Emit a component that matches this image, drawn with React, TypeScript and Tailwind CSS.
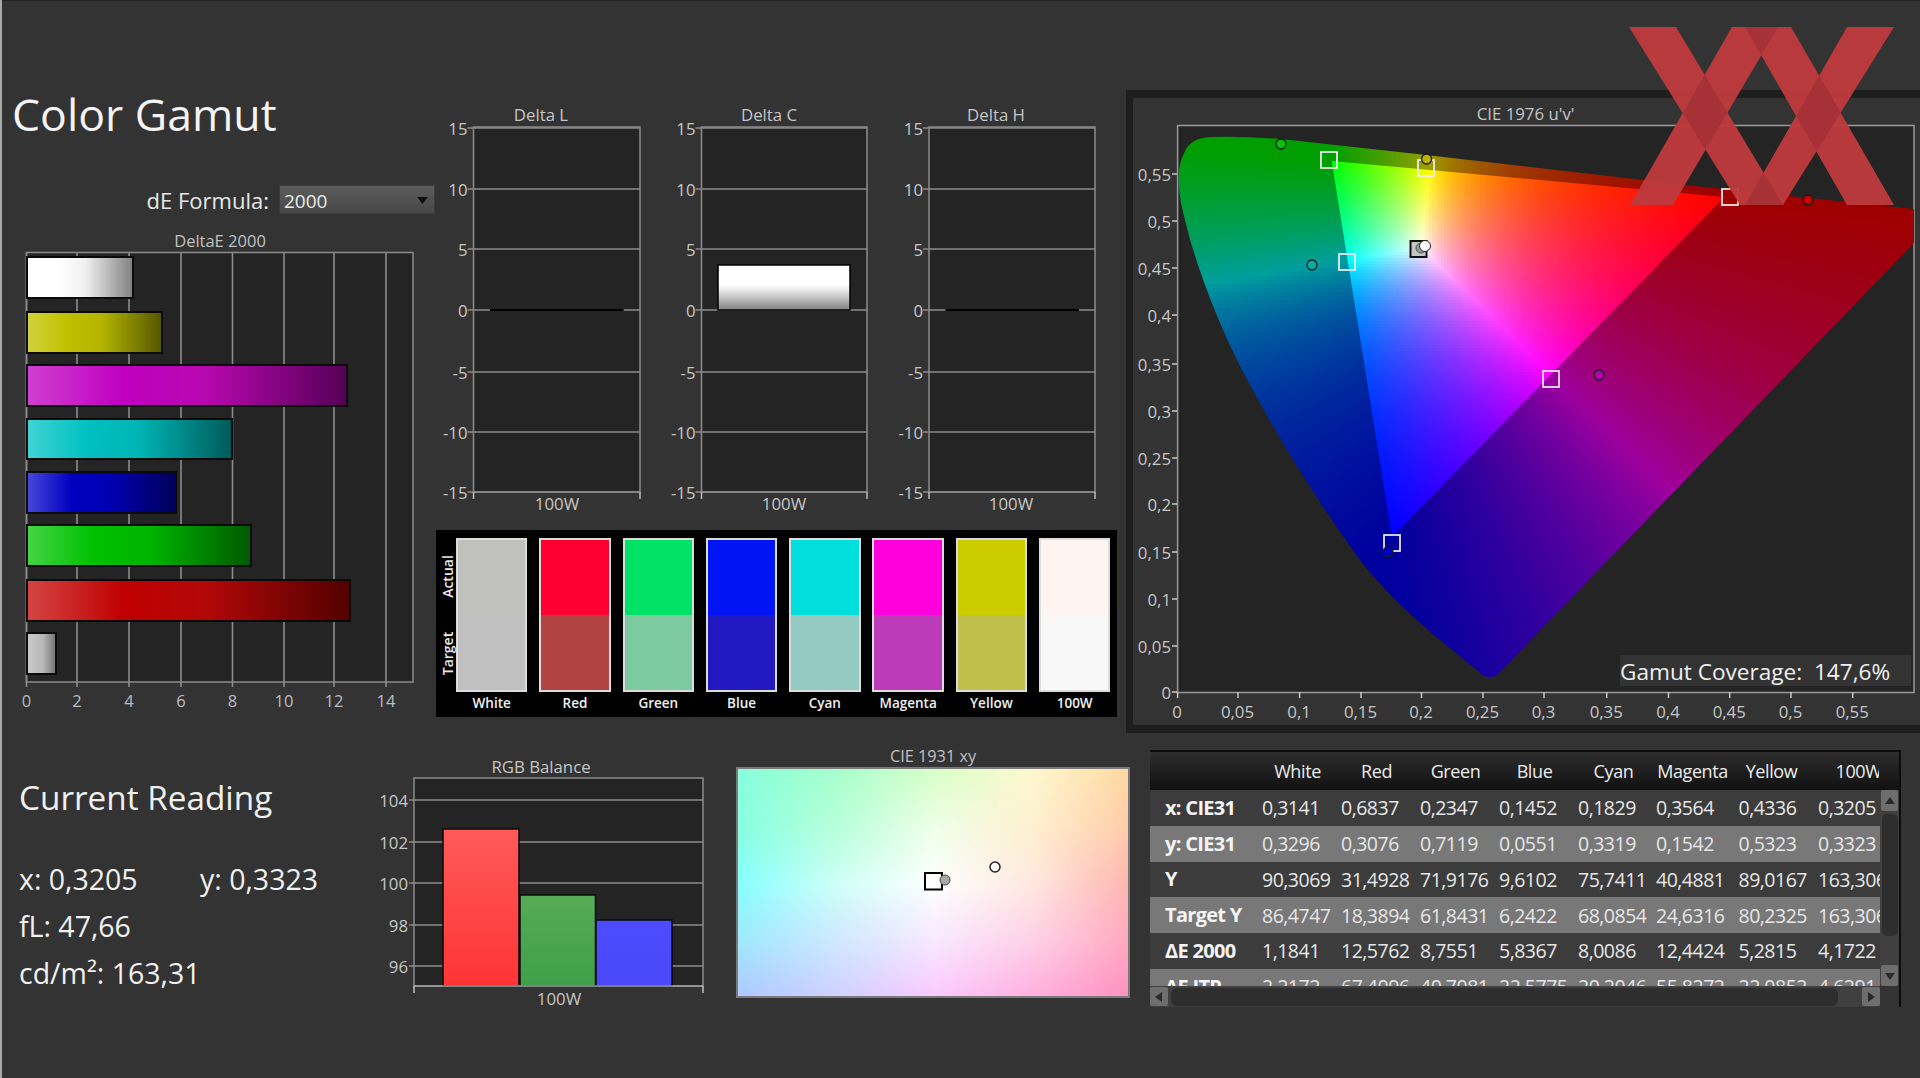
import { useMemo } from "react";

const TICK = "#8c8c8c";
const PLOT = "#242424";
const LABEL = "fill-[#c6c6c6] text-[16.8px]";

// gamut triangle corners and white point weights, in page pixels
const R = [1724.6, 197];
const G = [1331.7, 161];
const B = [1392, 537];
const WHITE = [0.1946, 0.5926, 0.2128];

const LOCUS = "M1914 209L1722 189L1643 180L1426 155L1281 139Q1240 136 1212 137Q1192 137 1185 151Q1178 165 1178.6 180Q1179 192 1181 203C1194 265 1222 333 1247.5 380C1282 445 1320 505 1360 560C1395 605 1440 640 1477 670Q1490 686 1505 667L1914 243Z";
const INNER = `M${R[0]} ${R[1]}L${G[0]} ${G[1]}L${B[0]} ${B[1]}Z`;

function weights(x: number, y: number) {
  const d = (G[1] - B[1]) * (R[0] - B[0]) + (B[0] - G[0]) * (R[1] - B[1]);
  const r = ((G[1] - B[1]) * (x - B[0]) + (B[0] - G[0]) * (y - B[1])) / d;
  const g = ((B[1] - R[1]) * (x - B[0]) + (R[0] - B[0]) * (y - B[1])) / d;
  return [r, g, 1 - r - g];
}

function gamutColor(x: number, y: number, inside: boolean) {
  const w = weights(x, y).map((v, i) => Math.max(v, 0) / WHITE[i]);
  const max = Math.max(...w);
  const c = w.map((v) => (inside ? Math.pow(v / max, 0.95) * 255 : (v / max) * 158));
  return `rgb(${c[0] | 0},${c[1] | 0},${c[2] | 0})`;
}

// rough test against the locus outline, only to skip cells nobody sees
function nearLocus(x: number, y: number) {
  if (y < 130 || y > 690) return false;
  const right = y < 243 ? 1920 : 1914 - (y - 243) * 0.965 + 8;
  const left = y < 267 ? 1174 : 1196 + (y - 267) * 0.55 - 30;
  return x >= left && x <= right;
}

function GamutMesh() {
  const cells = useMemo(() => {
    const out: { x: number; y: number; s: number; f: string }[] = [];
    for (let y = 132; y < 690; y += 4) {
      for (let x = 1176; x < 1916; x += 4) {
        if (!nearLocus(x, y)) continue;
        const w = weights(x + 2, y + 2);
        if (Math.min(...w) > 0.03) continue;
        out.push({ x, y, s: 4, f: gamutColor(x + 2, y + 2, false) });
      }
    }
    return out;
  }, []);
  const inner = useMemo(() => {
    const out: { x: number; y: number; s: number; f: string }[] = [];
    for (let y = 159; y < 540; y += 3) {
      for (let x = 1330; x < 1727; x += 3) {
        if (Math.min(...weights(x + 1.5, y + 1.5)) < -0.02) continue;
        out.push({ x, y, s: 3, f: gamutColor(x + 1.5, y + 1.5, true) });
      }
    }
    return out;
  }, []);
  return (
    <>
      <defs>
        <clipPath id="locus"><path d={LOCUS} /></clipPath>
        <clipPath id="inner"><path d={INNER} /></clipPath>
      </defs>
      <g clipPath="url(#locus)" shapeRendering="crispEdges">
        {cells.map((c) => <rect key={`${c.x}-${c.y}`} x={c.x} y={c.y} width={c.s} height={c.s} fill={c.f} />)}
      </g>
      <g clipPath="url(#inner)" shapeRendering="crispEdges">
        {inner.map((c) => <rect key={`${c.x}-${c.y}`} x={c.x} y={c.y} width={c.s} height={c.s} fill={c.f} />)}
      </g>
    </>
  );
}

const XY_COLORS = [
  ["#88ffdd", "#a8ffcc", "#d8ffc8", "#fff8d0", "#ffd8a0"],
  ["#88ffe0", "#b8ffdc", "#f0ffe8", "#fff0d0", "#ffcca8"],
  ["#88ffff", "#d0fff8", "#ffffff", "#ffe8e0", "#ffb4b0"],
  ["#a0e8ff", "#d0e8ff", "#f8e8ff", "#ffd0e8", "#ffa8c0"],
  ["#b0c8ff", "#d0d0ff", "#fcc8ff", "#ffb0e0", "#ff90c0"],
].map((row) => row.map((h) => [1, 3, 5].map((i) => parseInt(h.slice(i, i + 2), 16))));

function xyColor(u: number, v: number) {
  const cx = Math.min(u * 4, 3.999);
  const cy = Math.min(v * 4, 3.999);
  const i = Math.floor(cx);
  const j = Math.floor(cy);
  const a = cx - i;
  const b = cy - j;
  const c = [0, 1, 2].map((k) =>
    (XY_COLORS[j][i][k] * (1 - a) + XY_COLORS[j][i + 1][k] * a) * (1 - b) +
    (XY_COLORS[j + 1][i][k] * (1 - a) + XY_COLORS[j + 1][i + 1][k] * a) * b
  );
  return `rgb(${c[0] | 0},${c[1] | 0},${c[2] | 0})`;
}

function XyChart() {
  const cells = useMemo(() => {
    const out: { x: number; y: number; f: string }[] = [];
    for (let y = 768; y < 997; y += 4) {
      for (let x = 737; x < 1129; x += 4) {
        out.push({ x, y, f: xyColor((x - 737) / 392, (y - 768) / 229) });
      }
    }
    return out;
  }, []);
  return (
    <svg viewBox="730 740 410 270" className="block w-[410px] h-[270px] shrink-0">
      <text x="933" y="756" textAnchor="middle" dominantBaseline="central" className="fill-[#c0c0c0] text-[16.3px]">CIE 1931 xy</text>
      <defs><clipPath id="xyclip"><rect x="737" y="768" width="392" height="229" /></clipPath></defs>
      <g clipPath="url(#xyclip)" shapeRendering="crispEdges">
        {cells.map((c) => <rect key={`${c.x}-${c.y}`} x={c.x} y={c.y} width="4" height="4" fill={c.f} />)}
      </g>
      <rect x="737" y="768" width="392" height="229" fill="none" stroke="#7a7a7a" strokeWidth="2" />
      <rect x="925" y="873" width="17" height="16.5" fill="#fff" stroke="#000" strokeWidth="2" />
      <circle cx="945" cy="880" r="5" fill="#a8a8a8" stroke="#444" />
      <circle cx="995" cy="867" r="5" fill="#fff" stroke="#222" strokeWidth="1.5" />
    </svg>
  );
}

const DE_BARS = [
  { top: 257, h: 41, end: 133, id: "deWhite", stops: ["#ffffff", "#ffffff", "#f0f0f0", "#808080"] },
  { top: 312, h: 41, end: 162, id: "deYellow", stops: ["#d2d23c", "#c0c000", "#b4b400", "#565600"] },
  { top: 365, h: 41, end: 347, id: "deMagenta", stops: ["#d040d0", "#c000c0", "#b808b0", "#560056"] },
  { top: 419, h: 40, end: 232, id: "deCyan", stops: ["#40d4d4", "#00c0c0", "#00b4b4", "#005a5a"] },
  { top: 472, h: 41, end: 176, id: "deBlue", stops: ["#4848d8", "#0000c0", "#0000b4", "#000058"] },
  { top: 525, h: 41, end: 251, id: "deGreen", stops: ["#44d444", "#00c000", "#00b400", "#005a00"] },
  { top: 580, h: 41, end: 350, id: "deRed", stops: ["#d44444", "#c00000", "#b40808", "#520000"] },
  { top: 633, h: 41, end: 56, id: "deGrey", stops: ["#cccccc", "#c0c0c0", "#b8b8b8", "#707070"] },
];

function DeltaEChart() {
  const grid: [number, string][] = [[26.5, "0"], [77, "2"], [129, "4"], [181, "6"], [232.5, "8"], [284, "10"], [334, "12"], [386, "14"]];
  return (
    <svg viewBox="2 214 434 500" className="block w-[434px] h-[500px]">
      <defs>
        {DE_BARS.map((b) => (
          <linearGradient key={b.id} id={b.id}>
            <stop offset="0" stopColor={b.stops[0]} />
            <stop offset="0.3" stopColor={b.stops[1]} />
            <stop offset="0.55" stopColor={b.stops[2]} />
            <stop offset="1" stopColor={b.stops[3]} />
          </linearGradient>
        ))}
      </defs>
      <text x="220" y="240" textAnchor="middle" dominantBaseline="central" className="fill-[#c0c0c0] text-[16.5px]">DeltaE 2000</text>
      <rect x="26.5" y="252.5" width="386.5" height="429.5" fill={PLOT} stroke={TICK} strokeWidth="1.5" />
      {grid.map(([x, t]) => (
        <g key={t}>
          <line x1={x} x2={x} y1="252" y2="687" stroke={TICK} strokeWidth="1.6" />
          <text x={x} y="700" textAnchor="middle" dominantBaseline="central" className="fill-[#b8bcc4] text-[16.5px]">{t}</text>
        </g>
      ))}
      {DE_BARS.map((b) => (
        <rect key={b.id} x="27" y={b.top} width={b.end - 27} height={b.h} fill={`url(#${b.id})`} stroke="#0a0a0a" strokeWidth="2" />
      ))}
    </svg>
  );
}

function DeltaPlot({ left, right, title, titleX, labelX, bar }: { left: number; right: number; title: string; titleX: number; labelX: number; bar?: boolean }) {
  const rows: [number, string][] = [[128, "15"], [189, "10"], [249, "5"], [310, "0"], [372, "-5"], [432, "-10"], [492, "-15"]];
  return (
    <g>
      <text x={titleX} y="114" textAnchor="middle" dominantBaseline="central" className={LABEL}>{title}</text>
      <rect x={left} y="127" width={right - left} height="365" fill={PLOT} stroke={TICK} strokeWidth="1.5" />
      {rows.map(([y, t]) => (
        <g key={t}>
          <line x1={left - 6} x2={right} y1={y} y2={y} stroke={TICK} strokeWidth="1.5" />
          <text x={left - 6} y={y} textAnchor="end" dominantBaseline="central" className={LABEL}>{t}</text>
        </g>
      ))}
      <line x1={left} x2={left} y1="492" y2="499" stroke="#bbb" strokeWidth="1.5" />
      <line x1={right} x2={right} y1="492" y2="499" stroke="#bbb" strokeWidth="1.5" />
      <text x={labelX} y="503" textAnchor="middle" dominantBaseline="central" className={LABEL}>100W</text>
      {bar ? (
        <rect x={left + 16.5} y="265" width="132" height="45" fill="url(#whiteBar)" stroke="#000" strokeWidth="1.5" />
      ) : (
        <line x1={left + 16.5} x2={left + 150} y1="310" y2="310" stroke="#000000" strokeWidth="2" />
      )}
    </g>
  );
}

function DeltaCharts() {
  return (
    <svg viewBox="436 1 690 529" className="block w-[690px] h-[529px]">
      <defs>
        <linearGradient id="whiteBar" x1="0" x2="0" y1="0" y2="1">
          <stop offset="0" stopColor="#fff" />
          <stop offset="0.45" stopColor="#fff" />
          <stop offset="0.7" stopColor="#c8c8c8" />
          <stop offset="1" stopColor="#808080" />
        </linearGradient>
      </defs>
      <DeltaPlot left={473.5} right={640} title="Delta L" titleX={541} labelX={557} />
      <DeltaPlot left={701.5} right={867} title="Delta C" titleX={769} labelX={784} bar />
      <DeltaPlot left={929} right={1095} title="Delta H" titleX={996} labelX={1011} />
    </svg>
  );
}

const SWATCHES = [
  { name: "White", actual: "bg-[#c0c0bd]", target: "bg-[#c0c0c0]" },
  { name: "Red", actual: "bg-[#ff0033]", target: "bg-[#b24343]" },
  { name: "Green", actual: "bg-[#00e266]", target: "bg-[#7dc9a0]" },
  { name: "Blue", actual: "bg-[#0014f5]", target: "bg-[#2219c2]" },
  { name: "Cyan", actual: "bg-[#00dfdc]", target: "bg-[#94cac2]" },
  { name: "Magenta", actual: "bg-[#ff00dd]", target: "bg-[#bb3bb9]" },
  { name: "Yellow", actual: "bg-[#cccc00]", target: "bg-[#c0bf4c]" },
  { name: "100W", actual: "bg-[#fdf4f1]", target: "bg-[#f8f8f8]" },
];

function SwatchPanel() {
  return (
    <div className="w-[681px] h-[187px] bg-black flex pt-[8px] pl-[3px]">
      <div className="w-[17px] h-[154px] flex flex-col text-[14px] font-semibold text-[#e8e8e8]">
        <div className="h-[77px] flex items-center justify-center"><span className="-rotate-90">Actual</span></div>
        <div className="h-[77px] flex items-center justify-center"><span className="-rotate-90">Target</span></div>
      </div>
      <div className="flex gap-[11.9px]">
        {SWATCHES.map((s) => (
          <div key={s.name} className="w-[71.4px] flex flex-col items-center">
            <div className="w-full h-[154px] border-2 border-[#dcdcdc] flex flex-col">
              <div className={`h-[75px] ${s.actual}`} />
              <div className={`flex-1 ${s.target}`} />
            </div>
            <div className="mt-[2px] text-[13.5px] leading-[18px] font-semibold text-[#f0f0f0]">{s.name}</div>
          </div>
        ))}
      </div>
    </div>
  );
}

const X_TICKS: [number, string][] = [[1177.6, "0"], [1238, "0,05"], [1299.6, "0,1"], [1361, "0,15"], [1421.5, "0,2"], [1483, "0,25"], [1544, "0,3"], [1606.7, "0,35"], [1668.5, "0,4"], [1729.7, "0,45"], [1791, "0,5"], [1852.7, "0,55"]];
const Y_TICKS: [number, string][] = [[174, "0,55"], [221, "0,5"], [268, "0,45"], [315, "0,4"], [364, "0,35"], [411, "0,3"], [458, "0,25"], [504, "0,2"], [552, "0,15"], [599, "0,1"], [646, "0,05"], [692, "0"]];

function CieChart() {
  const squares = [[1329, 160], [1426, 168], [1730, 197], [1347, 262], [1551, 379], [1392, 543]];
  const circles: [number, number, string][] = [[1281, 144, "#00c800"], [1426.6, 159, "#c0b400"], [1808, 200, "#c80000"], [1312, 265, "#00b0a8"], [1599, 375, "#b000b0"], [1388, 552, "#0000c8"]];
  return (
    <svg viewBox="1133 98 787 627" className="block w-[787px] h-[627px]">
      <text x="1525.6" y="113" textAnchor="middle" dominantBaseline="central" className={LABEL}>CIE 1976 u'v'</text>
      <rect x="1177.6" y="125.5" width="736.4" height="567" fill={PLOT} stroke="#9a9a9a" strokeWidth="1.5" />
      <GamutMesh />
      {Y_TICKS.map(([y, t]) => (
        <g key={t}>
          <line x1="1172" x2="1177" y1={y} y2={y} stroke="#c8c8c8" strokeWidth="1.5" />
          <text x="1171" y={y} textAnchor="end" dominantBaseline="central" className={LABEL}>{t}</text>
        </g>
      ))}
      {X_TICKS.map(([x, t]) => (
        <g key={t}>
          <line x1={x} x2={x} y1="692" y2="698" stroke="#c8c8c8" strokeWidth="1.5" />
          <text x={x - 0.5} y="711" textAnchor="middle" dominantBaseline="central" className={LABEL}>{t}</text>
        </g>
      ))}
      {squares.map(([x, y]) => (
        <rect key={x} x={x - 8} y={y - 8} width="16" height="16" fill="none" stroke="#f0f0f0" strokeWidth="1.7" />
      ))}
      {circles.map(([x, y, f]) => (
        <circle key={x} cx={x} cy={y} r="5" fill={f} stroke="#1a1a1a" strokeWidth="1.3" />
      ))}
      <rect x="1410.5" y="241" width="16" height="16" fill="#c4c4c4" stroke="#111" strokeWidth="2" />
      <circle cx="1421" cy="248" r="5" fill="#9a9a9a" stroke="#555" />
      <circle cx="1425" cy="246" r="5.5" fill="#fff" stroke="#222" />
      <rect x="1620" y="655" width="291" height="31" fill="#333333" />
      <text x="1620" y="671" dominantBaseline="central" xmlSpace="preserve" className="fill-[#f0f0f0] text-[22.6px]">Gamut Coverage:  147,6%</text>
    </svg>
  );
}

const RGB_BARS = [
  { x: 443, w: 76, top: 829, id: "rgbRed", c: ["#ff5a5a", "#ff3434"] },
  { x: 520, w: 75.5, top: 895, id: "rgbGreen", c: ["#57ab57", "#3f9f4a"] },
  { x: 596, w: 76, top: 920, id: "rgbBlue", c: ["#4c4cff", "#4a48f8"] },
];

function RgbChart() {
  const rows: [number, string][] = [[800, "104"], [842, "102"], [883, "100"], [925, "98"], [966, "96"]];
  return (
    <svg viewBox="350 740 380 270" className="block w-[380px] h-[270px] shrink-0">
      <defs>
        {RGB_BARS.map((b) => (
          <linearGradient key={b.id} id={b.id} x1="0" x2="0" y1="0" y2="1">
            <stop offset="0" stopColor={b.c[0]} />
            <stop offset="1" stopColor={b.c[1]} />
          </linearGradient>
        ))}
      </defs>
      <text x="541" y="766" textAnchor="middle" dominantBaseline="central" className={LABEL}>RGB Balance</text>
      <rect x="414" y="778" width="289" height="208" fill={PLOT} stroke={TICK} strokeWidth="1.5" />
      {rows.map(([y, t]) => (
        <g key={t}>
          <line x1="409" x2="703" y1={y} y2={y} stroke={TICK} strokeWidth="1.5" />
          <text x="408" y={y} textAnchor="end" dominantBaseline="central" className={LABEL}>{t}</text>
        </g>
      ))}
      {RGB_BARS.map((b) => (
        <rect key={b.id} x={b.x} y={b.top} width={b.w} height={986 - b.top} fill={`url(#${b.id})`} stroke="#0a0a0a" strokeWidth="1.5" />
      ))}
      <line x1="414" x2="703" y1="986" y2="986" stroke="#a0a0a0" strokeWidth="1.5" />
      <line x1="414" x2="414" y1="986" y2="993" stroke="#c0c0c0" strokeWidth="1.5" />
      <line x1="703" x2="703" y1="986" y2="993" stroke="#c0c0c0" strokeWidth="1.5" />
      <text x="559" y="998" textAnchor="middle" dominantBaseline="central" className={LABEL}>100W</text>
    </svg>
  );
}

const COLUMNS = ["White", "Red", "Green", "Blue", "Cyan", "Magenta", "Yellow", "100W"];
const COL_W = ["w-[79px]", "w-[79px]", "w-[79px]", "w-[79px]", "w-[78px]", "w-[82.5px]", "w-[79.5px]", "w-[79px]"];
const ROWS: [string, string[]][] = [
  ["x: CIE31", ["0,3141", "0,6837", "0,2347", "0,1452", "0,1829", "0,3564", "0,4336", "0,3205"]],
  ["y: CIE31", ["0,3296", "0,3076", "0,7119", "0,0551", "0,3319", "0,1542", "0,5323", "0,3323"]],
  ["Y", ["90,3069", "31,4928", "71,9176", "9,6102", "75,7411", "40,4881", "89,0167", "163,3069"]],
  ["Target Y", ["86,4747", "18,3894", "61,8431", "6,2422", "68,0854", "24,6316", "80,2325", "163,3069"]],
  ["ΔE 2000", ["1,1841", "12,5762", "8,7551", "5,8367", "8,0086", "12,4424", "5,2815", "4,1722"]],
  ["ΔE ITP", ["2,2172", "67,4096", "40,7081", "22,5775", "20,2046", "55,8272", "22,0852", "4,6291"]],
];

function Arrow({ d }: { d: string }) {
  return (
    <svg viewBox="0 0 12 12" className="w-[12px] h-[12px]"><path d={d} fill="#2a2a2a" /></svg>
  );
}

function ReadingsTable() {
  return (
    <div className="ml-[10px] mt-[10px] w-[751px] h-[257px] border-t-2 border-r-2 border-[#0c0c0c] flex flex-col overflow-hidden bg-[#333333]">
      <div className="h-[38px] shrink-0 flex bg-gradient-to-b from-[#2e2e2e] to-[#111111]">
        <div className="w-[729px] flex pl-[108px] overflow-hidden">
          {COLUMNS.map((c, i) => (
            <div key={c} className={`shrink-0 text-center text-[18px] leading-[38px] text-[#ececec] tracking-[-0.4px] ${i === 7 ? "w-[79px] pl-[16px]" : "w-[79px]"}`}>{c}</div>
          ))}
        </div>
      </div>
      <div className="h-[196px] shrink-0 flex">
        <div className="w-[730px] h-[196px] overflow-hidden">
          {ROWS.map(([label, values], i) => (
            <div key={label} className={`h-[35.8px] flex items-center ${i % 2 ? "bg-[#787878]" : "bg-[#3c3c3c]"}`}>
              <div className="w-[112px] shrink-0 pl-[15px] text-[20px] font-bold text-[#f4f4f4] tracking-[-0.7px] whitespace-nowrap">{label}</div>
              {values.map((v, k) => (
                <div key={k} className={`${COL_W[k]} shrink-0 text-[19.5px] text-[#e6e6e6] tracking-[-0.5px]`}>{v}</div>
              ))}
            </div>
          ))}
        </div>
        <div className="w-[19px] h-[196px] bg-[#404040] flex flex-col items-center">
          <div className="w-[17px] h-[21px] bg-[#6e6e6e] rounded-[2px] flex items-center justify-center"><Arrow d="M6 2L11 9H1Z" /></div>
          <div className="w-[16px] h-[122px] mt-[3px] bg-[#2e2e2e] rounded-[5px]" />
          <div className="w-[17px] h-[21px] mt-auto bg-[#6e6e6e] rounded-[2px] flex items-center justify-center"><Arrow d="M6 10L1 3H11Z" /></div>
        </div>
      </div>
      <div className="h-[21px] shrink-0 w-[730px] bg-[#404040] flex items-center">
        <div className="w-[18px] h-[19px] bg-[#6e6e6e] rounded-[2px] flex items-center justify-center"><Arrow d="M2 6L9 1V11Z" /></div>
        <div className="ml-[3px] w-[667px] h-[18px] bg-[#2e2e2e] rounded-[6px]" />
        <div className="ml-auto w-[18px] h-[19px] bg-[#6e6e6e] rounded-[2px] flex items-center justify-center"><Arrow d="M10 6L3 1V11Z" /></div>
      </div>
    </div>
  );
}

const XX_STROKES = [
  "1629,27 1676,27 1783,205 1740,205",
  "1732,27 1778,27 1673,205 1630,205",
  "1745,27 1791,27 1894,205 1847,205",
  "1847,27 1894,27 1783,205 1745,205",
];

function Watermark() {
  return (
    <svg viewBox="0 0 1920 240" className="absolute left-0 top-0 w-[1920px] h-[240px] pointer-events-none">
      <defs>
        {XX_STROKES.map((p, i) => (
          <clipPath key={i} id={`xx${i}`}><polygon points={p} /></clipPath>
        ))}
      </defs>
      {XX_STROKES.map((p, i) => <polygon key={i} points={p} fill="#bd3a3d" fillOpacity="0.96" />)}
      {XX_STROKES.map((p, i) =>
        XX_STROKES.slice(i + 1).map((q, k) => (
          <polygon key={`${i}-${k}`} points={q} clipPath={`url(#xx${i})`} fill="#a63237" />
        ))
      )}
    </svg>
  );
}

export default function App() {
  return (
    <div className="relative w-[1920px] h-[1078px] overflow-hidden flex bg-[#333333] font-['Open_Sans','Noto_Sans',sans-serif] text-white">
      <div className="w-[2px] h-full bg-[#a8a8a8]" />
      <div className="w-[1918px] h-full flex flex-col border-t border-[#222222]">
        <div className="h-[739px] shrink-0 flex">
          <div className="w-[434px] shrink-0">
            <h1 className="pt-[85px] pl-[10px] text-[44.6px] leading-[56px] text-[#f4f4f4]">Color Gamut</h1>
            <div className="mt-[43px] h-[29px] pr-[1px] flex justify-end items-center gap-[10px]">
              <span className="mt-[2px] text-[22px] text-[#e8e8e8]">dE Formula:</span>
              <div className="relative w-[156px] h-[29px] border border-[#3c3c3c] bg-gradient-to-b from-[#5c5c5c] to-[#484848] pl-[4px] text-[19px] leading-[30px] text-[#ececec]">
                2000
                <svg viewBox="0 0 12 8" className="absolute right-[6px] top-[11px] w-[11px] h-[7px]"><path d="M0 0H12L6 8Z" fill="#0c0c0c" /></svg>
              </div>
            </div>
            <DeltaEChart />
          </div>
          <div className="w-[690px] shrink-0">
            <DeltaCharts />
            <SwatchPanel />
          </div>
          <div className="flex-1 pt-[89px]">
            <div className="border-t-8 border-b-8 border-l-[7px] border-[#1e1e1e]">
              <CieChart />
            </div>
          </div>
        </div>
        <div className="flex-1 flex">
          <div className="w-[348px] shrink-0 pl-[17px] text-[#f0f0f0]">
            <h2 className="pt-[35px] text-[33.3px] leading-[44px] font-normal">Current Reading</h2>
            <div className="mt-[37px] text-[28.5px] leading-[47px]">
              <div className="flex"><span className="w-[181px]">x: 0,3205</span><span>y: 0,3323</span></div>
              <div>fL: 47,66</div>
              <div>cd/m²: 163,31</div>
            </div>
          </div>
          <RgbChart />
          <XyChart />
          <ReadingsTable />
        </div>
      </div>
      <Watermark />
    </div>
  );
}
